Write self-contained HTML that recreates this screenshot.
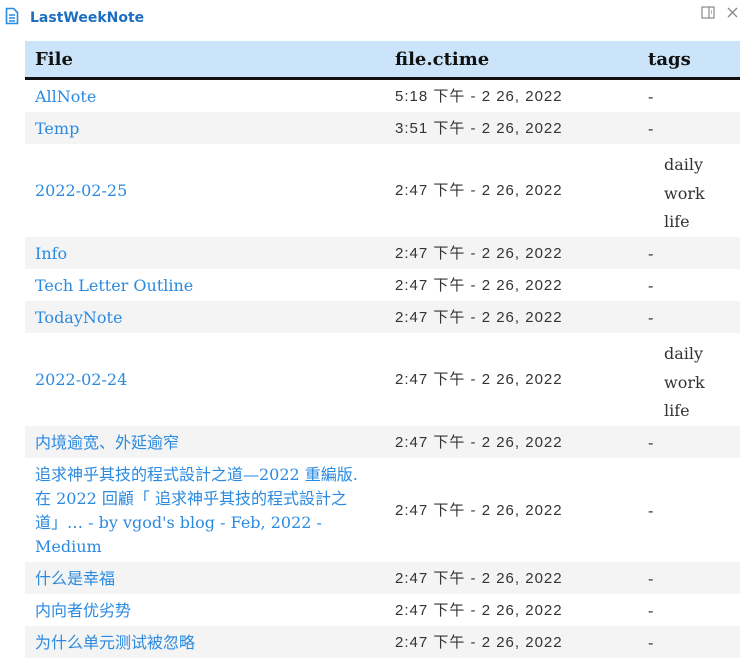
<!DOCTYPE html>
<html><head><meta charset="utf-8"><style>
*{margin:0;padding:0;box-sizing:border-box}
body{width:753px;height:663px;background:#fff;font-family:"DejaVu Serif","Noto Sans CJK SC",serif;position:relative;overflow:hidden}
.title{position:absolute;left:30px;top:10px;font:bold 14px "DejaVu Sans",sans-serif;color:#1c6fc0}
.icon{position:absolute;left:5px;top:7px}
.r{position:absolute;left:25px;width:715px}
.g{background:#f4f4f4}
.c{position:absolute;font-size:16px;line-height:24px}
.f{left:10px;color:#2a8ae0;width:348px}
.t{left:370px;color:#333;font-family:"Liberation Sans","Noto Sans CJK SC",sans-serif;font-size:15px;letter-spacing:1px}
.x{left:623px;color:#333}
.tg{left:639px;color:#333;line-height:28.5px}
.hd{position:absolute;left:25px;top:41px;width:715px;background:#cce4f9;border-bottom:3px solid #111;height:39px}
.hd span{position:absolute;top:8px;font-weight:bold;font-size:18px;color:#111}
</style></head><body>
<svg class="icon" width="14" height="18" viewBox="0 0 14 18"><path d="M1.5 1.5h7l4 4v11h-11z" fill="none" stroke="#2a8ae0" stroke-width="1.6"/><path d="M4 8h6M4 11h6M4 14h6" stroke="#2a8ae0" stroke-width="1.4"/></svg>
<div class="title">LastWeekNote</div>
<svg style="position:absolute;left:701px;top:6px" width="14" height="13"><rect x="1" y="1" width="12" height="11" fill="none" stroke="#888" stroke-width="1.2"/><path d="M8 1v11M10 5h1M10 7h1" stroke="#888" stroke-width="1.2"/></svg>
<svg style="position:absolute;left:727px;top:7px" width="11" height="11"><path d="M1 1l9 9M10 1l-9 9" stroke="#888" stroke-width="1.3"/></svg>
<div class="hd"><span style="left:10px">File</span><span style="left:370px">file.ctime</span><span style="left:623px">tags</span></div>

<div class="r" style="top:80px;height:32px"><div class="c f" style="top:5px">AllNote</div><div class="c t" style="top:5px">5:18 下午 - 2 26, 2022</div><div class="c x" style="top:5px">-</div></div>
<div class="r g" style="top:112px;height:32px"><div class="c f" style="top:5px">Temp</div><div class="c t" style="top:5px">3:51 下午 - 2 26, 2022</div><div class="c x" style="top:5px">-</div></div>
<div class="r" style="top:144px;height:93px"><div class="c f" style="top:35px">2022-02-25</div><div class="c t" style="top:35px">2:47 下午 - 2 26, 2022</div><div class="c tg" style="top:7px">daily<br>work<br>life</div></div>
<div class="r g" style="top:237px;height:32px"><div class="c f" style="top:5px">Info</div><div class="c t" style="top:5px">2:47 下午 - 2 26, 2022</div><div class="c x" style="top:5px">-</div></div>
<div class="r" style="top:269px;height:32px"><div class="c f" style="top:5px">Tech Letter Outline</div><div class="c t" style="top:5px">2:47 下午 - 2 26, 2022</div><div class="c x" style="top:5px">-</div></div>
<div class="r g" style="top:301px;height:32px"><div class="c f" style="top:5px">TodayNote</div><div class="c t" style="top:5px">2:47 下午 - 2 26, 2022</div><div class="c x" style="top:5px">-</div></div>
<div class="r" style="top:333px;height:93px"><div class="c f" style="top:35px">2022-02-24</div><div class="c t" style="top:35px">2:47 下午 - 2 26, 2022</div><div class="c tg" style="top:7px">daily<br>work<br>life</div></div>
<div class="r g" style="top:426px;height:32px"><div class="c f" style="top:5px">内境逾宽、外延逾窄</div><div class="c t" style="top:5px">2:47 下午 - 2 26, 2022</div><div class="c x" style="top:5px">-</div></div>
<div class="r" style="top:458px;height:104px"><div class="c f" style="top:5px">追求神乎其技的程式設計之道—2022 重編版.<br>在 2022 回顧「 追求神乎其技的程式設計之<br>道」… - by vgod's blog - Feb, 2022 -<br>Medium</div><div class="c t" style="top:41px">2:47 下午 - 2 26, 2022</div><div class="c x" style="top:41px">-</div></div>
<div class="r g" style="top:562px;height:32px"><div class="c f" style="top:5px">什么是幸福</div><div class="c t" style="top:5px">2:47 下午 - 2 26, 2022</div><div class="c x" style="top:5px">-</div></div>
<div class="r" style="top:594px;height:32px"><div class="c f" style="top:5px">内向者优劣势</div><div class="c t" style="top:5px">2:47 下午 - 2 26, 2022</div><div class="c x" style="top:5px">-</div></div>
<div class="r g" style="top:626px;height:32px"><div class="c f" style="top:5px">为什么单元测试被忽略</div><div class="c t" style="top:5px">2:47 下午 - 2 26, 2022</div><div class="c x" style="top:5px">-</div></div>
</body></html>
